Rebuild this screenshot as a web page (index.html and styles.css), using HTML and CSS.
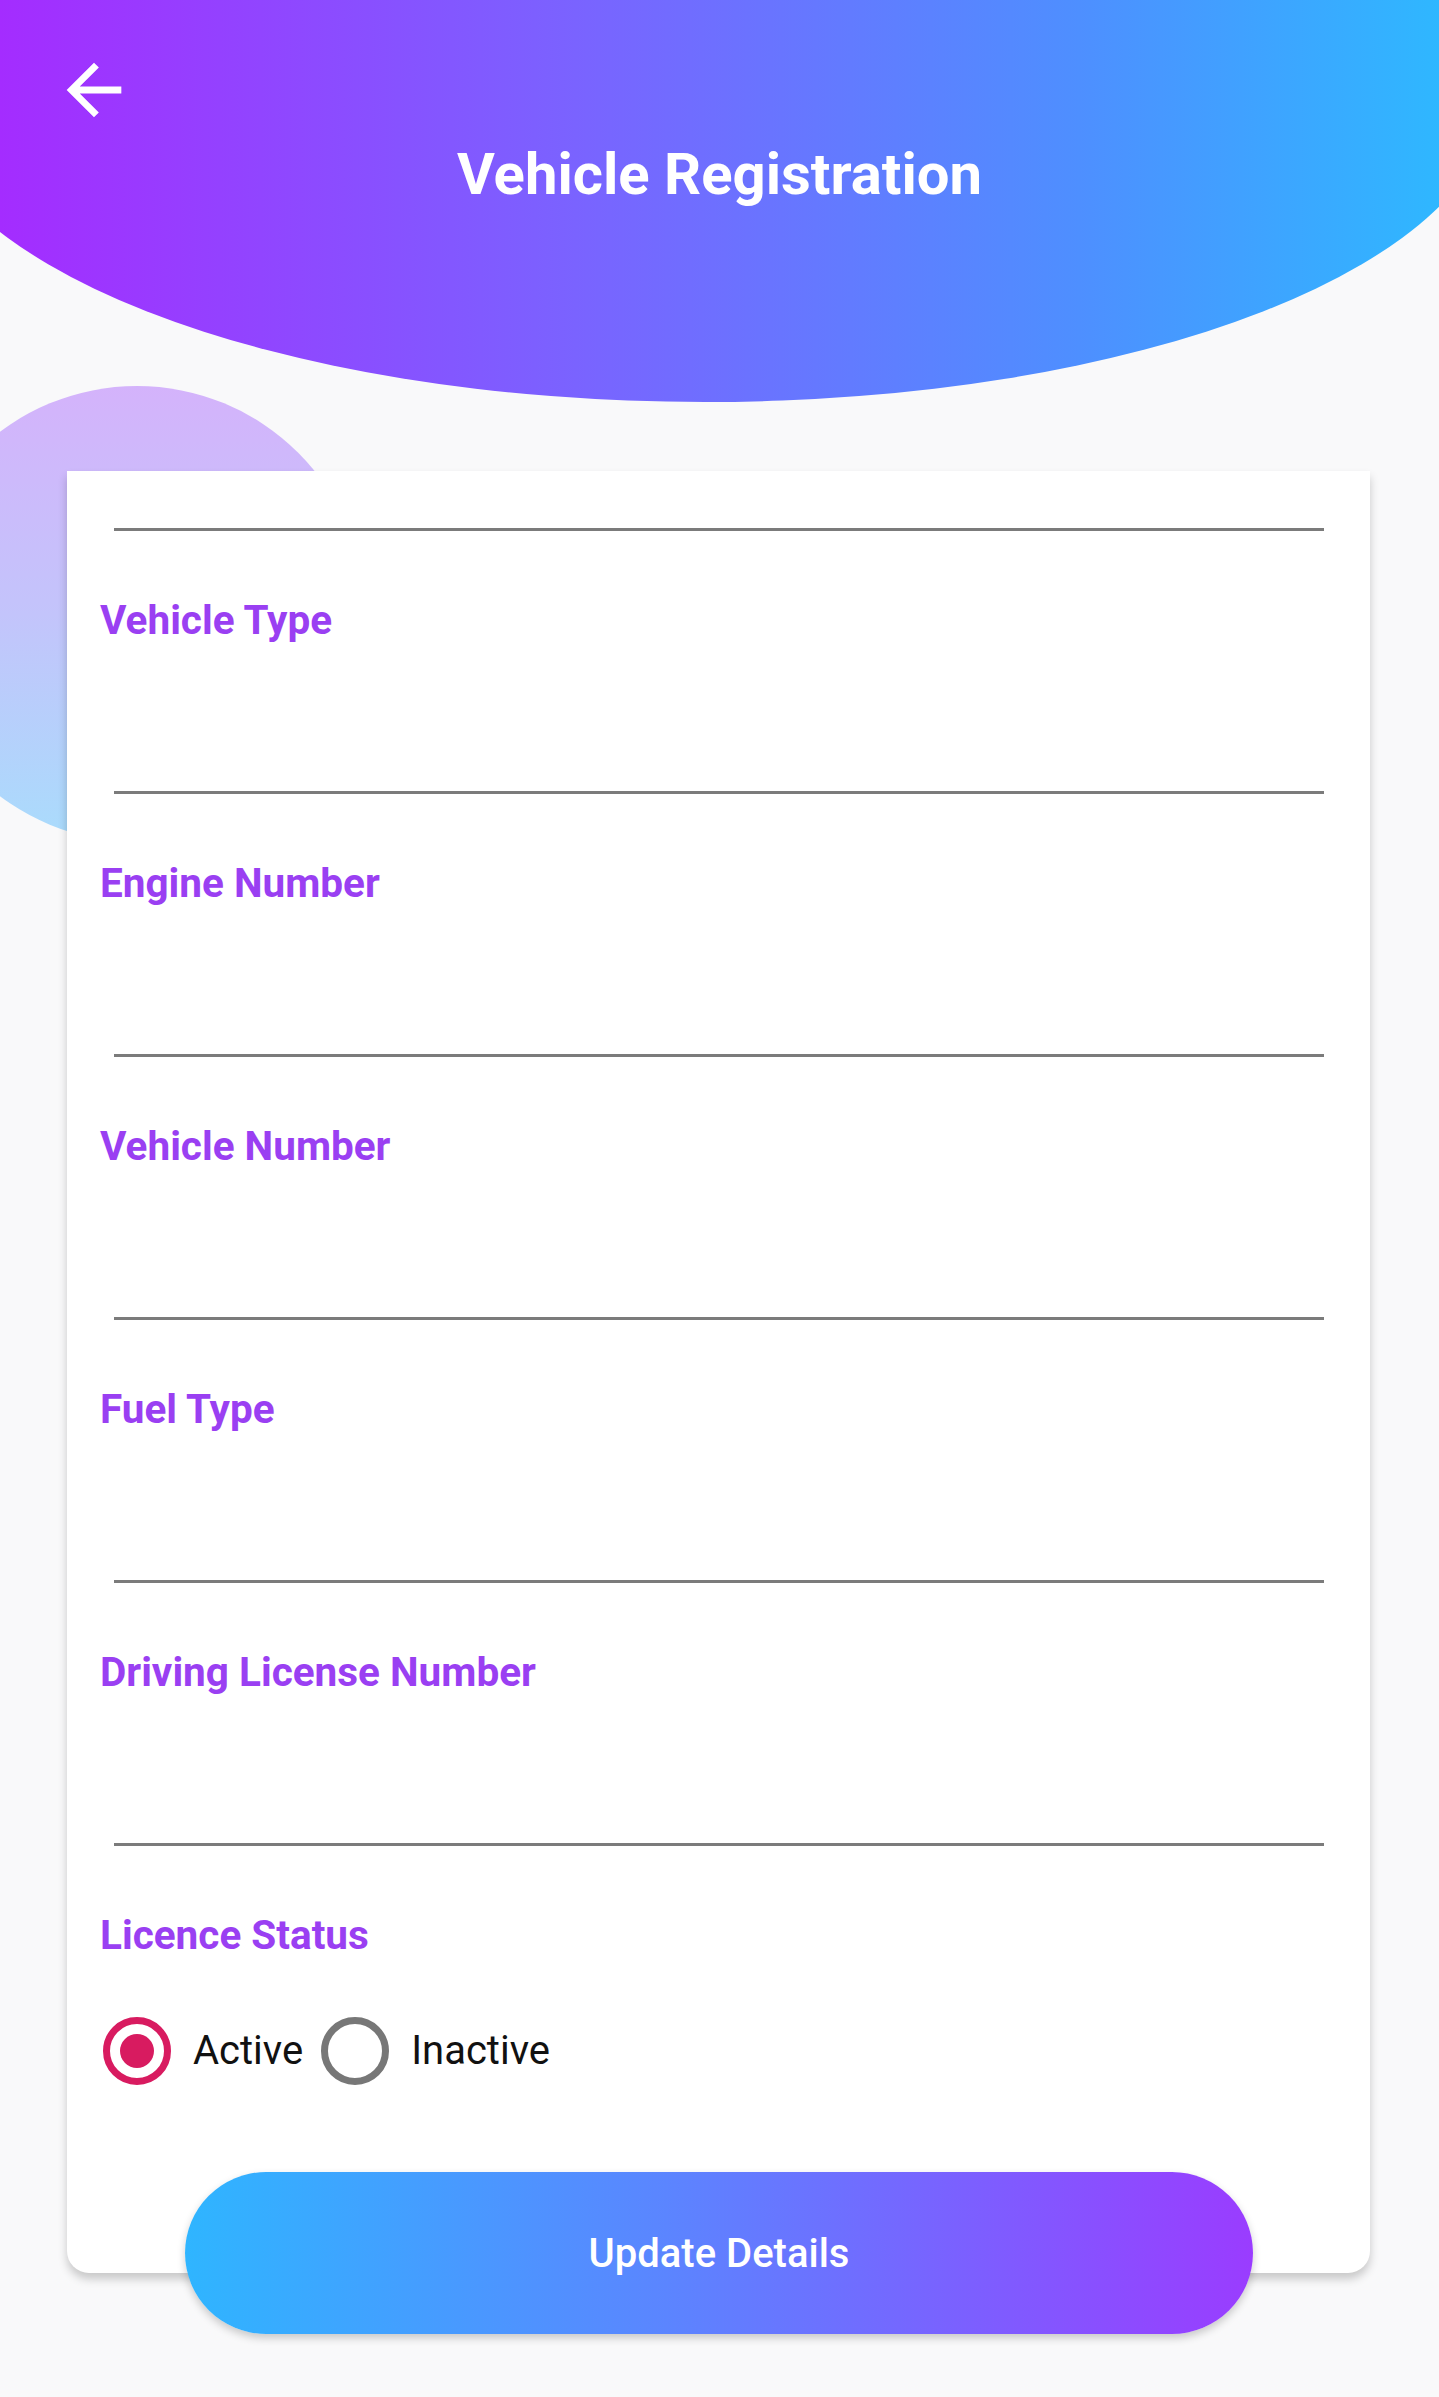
FILE: index.html
```html
<!DOCTYPE html>
<html lang="en">
<head>
<meta charset="utf-8">
<title>Vehicle Registration</title>
<link rel="stylesheet" href="styles.css">
</head>
<body>
<header class="appbar">
  <button class="back" aria-label="Back">
    <svg viewBox="0 0 24 24" width="82" height="82"><path fill="#fff" d="M20 11H7.83l5.59-5.59L12 4l-8 8 8 8 1.41-1.41L7.83 13H20v-2z"/></svg>
  </button>
  <h1 class="title">Vehicle Registration</h1>
</header>
<main class="content">
  <div class="blob"></div>
  <section class="card">
    <div class="input partial"></div>
    <div class="field"><label class="label">Vehicle Type</label><div class="input"></div></div>
    <div class="field"><label class="label">Engine Number</label><div class="input"></div></div>
    <div class="field"><label class="label">Vehicle Number</label><div class="input"></div></div>
    <div class="field"><label class="label">Fuel Type</label><div class="input"></div></div>
    <div class="field"><label class="label">Driving License Number</label><div class="input"></div></div>
    <div class="field"><label class="label">Licence Status</label></div>
    <div class="radios">
      <span class="radio checked"><span class="dot"></span></span><span class="rtext">Active</span>
      <span class="radio"></span><span class="rtext">Inactive</span>
    </div>
  </section>
  <button class="submit">Update Details</button>
</main>
</body>
</html>
```
FILE: styles.css
```css
html, body {
  margin: 0;
  padding: 0;
  background: #f9f9fa;
  font-family: Roboto, "Liberation Sans", sans-serif;
}
body {
  min-height: 2397px;
}
.appbar {
  height: 402px;
  box-sizing: border-box;
  padding-top: 49px;
  background: linear-gradient(90deg, #a42cff 0%, #7a63ff 40%, #4e8fff 75%, #2fb7ff 100%);
  clip-path: ellipse(790px 310px at 705px 92px);
}
.back {
  display: block;
  margin-left: 53px;
  width: 82px;
  height: 82px;
  padding: 0;
  border: 0;
  background: none;
}
.back svg {
  display: block;
}
.title {
  margin: 9px 0 0;
  font: 700 58px/68px Roboto, sans-serif;
  color: #fff;
  text-align: center;
}
.content {
  position: relative;
  padding-top: 69px;
}
.blob {
  position: absolute;
  left: -91px;
  top: -16px;
  width: 456px;
  height: 456px;
  border-radius: 50%;
  background: linear-gradient(180deg, #d4b3fb 0%, #c3c4fb 50%, #a9dcfc 100%);
}
.card {
  position: relative;
  margin: 0 69px 0 67px;
  padding: 0 46px 188px 33px;
  background: #fff;
  border-radius: 0 0 22px 22px;
  box-shadow: 0 6px 10px rgba(0, 0, 0, 0.2);
}
.input {
  height: 145px;
  margin-left: 14px;
  border-bottom: 3px solid #7b7b7b;
}
.input.partial {
  height: 57px;
}
.label {
  display: block;
  margin-top: 64px;
  height: 51px;
  font: 700 40.5px/51px Roboto, sans-serif;
  color: #9a3ff2;
}
.radios {
  display: flex;
  align-items: center;
  height: 68px;
  margin-top: 56px;
  padding-left: 3px;
}
.radio {
  box-sizing: border-box;
  width: 68px;
  height: 68px;
  border-radius: 50%;
  border: 7px solid #777;
  display: flex;
  align-items: center;
  justify-content: center;
  flex: none;
}
.radio.checked {
  border-color: #d81b60;
}
.dot {
  width: 34px;
  height: 34px;
  border-radius: 50%;
  background: #d81b60;
}
.rtext {
  margin: 0 18px 0 22px;
  font: 400 40px/48px Roboto, sans-serif;
  color: #111;
}
.submit {
  position: relative;
  display: block;
  width: 1068px;
  height: 162px;
  margin: -101px 0 0 185px;
  border: 0;
  border-radius: 81px;
  background: linear-gradient(90deg, #2fb5ff 0%, #5b85ff 45%, #9a3cff 100%);
  box-shadow: 0 4px 8px rgba(0, 0, 0, 0.2);
  font: 500 40px Roboto, sans-serif;
  color: #fff;
}
```
